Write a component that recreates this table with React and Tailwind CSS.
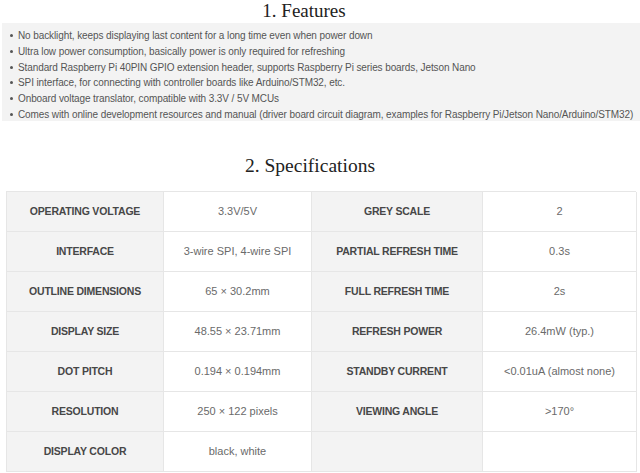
import React from 'react';

const features = [
  'No backlight, keeps displaying last content for a long time even when power down',
  'Ultra low power consumption, basically power is only required for refreshing',
  'Standard Raspberry Pi 40PIN GPIO extension header, supports Raspberry Pi series boards, Jetson Nano',
  'SPI interface, for connecting with controller boards like Arduino/STM32, etc.',
  'Onboard voltage translator, compatible with 3.3V / 5V MCUs',
  'Comes with online development resources and manual (driver board circuit diagram, examples for Raspberry Pi/Jetson Nano/Arduino/STM32)',
];

const specs = [
  ['OPERATING VOLTAGE', '3.3V/5V', 'GREY SCALE', '2'],
  ['INTERFACE', '3-wire SPI, 4-wire SPI', 'PARTIAL REFRESH TIME', '0.3s'],
  ['OUTLINE DIMENSIONS', '65 × 30.2mm', 'FULL REFRESH TIME', '2s'],
  ['DISPLAY SIZE', '48.55 × 23.71mm', 'REFRESH POWER', '26.4mW (typ.)'],
  ['DOT PITCH', '0.194 × 0.194mm', 'STANDBY CURRENT', '<0.01uA (almost none)'],
  ['RESOLUTION', '250 × 122 pixels', 'VIEWING ANGLE', '>170°'],
  ['DISPLAY COLOR', 'black, white', '', ''],
];

const Label = ({ children }) => (
  <div className="flex items-center justify-center bg-[#f3f3f3] border-r border-b border-[#e6e6e6] text-[10.5px] tracking-[-0.2px] font-bold text-[#474747]">
    {children}
  </div>
);

const Value = ({ children }) => (
  <div className="flex items-center justify-center bg-white border-r border-b border-[#e6e6e6] text-[11px] text-[#6a6a6a]">
    {children}
  </div>
);

export default function App() {
  return (
    <div className="w-[640px] h-[473px] overflow-hidden bg-white font-['Liberation_Sans',Arial,sans-serif]">
      <h1 className="h-[21px] pr-[32px] text-center font-['Liberation_Serif',serif] text-[19px] leading-[21px] text-[#222]">
        1. Features
      </h1>

      <ul className="mt-[2px] ml-[2px] bg-[#f3f3f3] pt-[5px] pb-[4px] h-[98px]">
        {features.map((f) => (
          <li key={f} className="flex items-center h-[15.7px] text-[10px] leading-[15px] text-[#555] tracking-[-0.1px]">
            <span className="ml-[8px] mr-[5px] w-[3px] h-[3px] rounded-full bg-[#555]" />
            <span>{f}</span>
          </li>
        ))}
      </ul>

      <h2 className="mt-[32px] h-[26px] pr-[20px] text-center font-['Liberation_Serif',serif] text-[19.5px] leading-[26px] text-[#222]">
        2. Specifications
      </h2>

      <div className="mt-[12px] ml-[6px] w-[630px] grid grid-cols-[157px_148px_171px_154px] auto-rows-[40px] border-t border-l border-[#e6e6e6]">
        {specs.map((row) => (
          <React.Fragment key={row[0]}>
            <Label>{row[0]}</Label>
            <Value>{row[1]}</Value>
            <Label>{row[2]}</Label>
            <Value>{row[3]}</Value>
          </React.Fragment>
        ))}
      </div>
    </div>
  );
}
